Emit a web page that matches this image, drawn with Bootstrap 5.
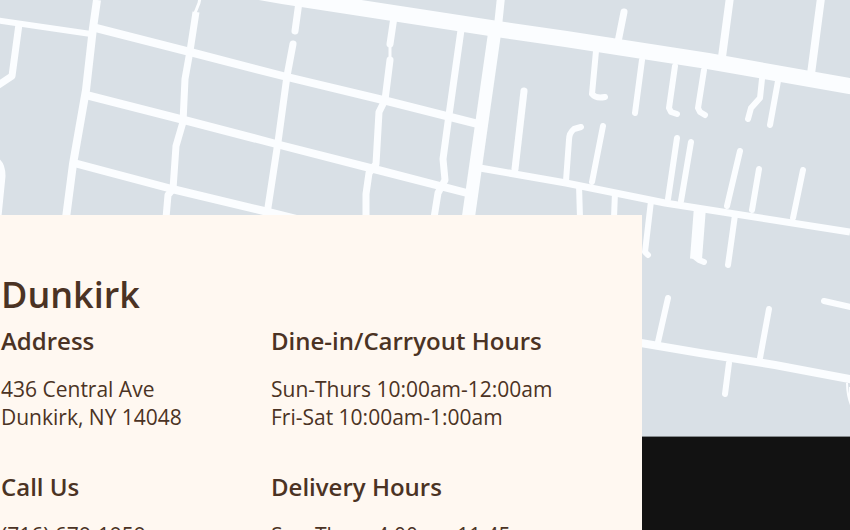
<!DOCTYPE html>
<html lang="en">
<head>
<meta charset="utf-8">
<meta name="viewport" content="width=device-width, initial-scale=1">
<title>Dunkirk</title>
<link href="https://cdn.jsdelivr.net/npm/bootstrap@5.3.0/dist/css/bootstrap.min.css" rel="stylesheet">
<style>
  body { background: #121212; color: #4b3324; font-family: "Open Sans", "Noto Sans", sans-serif; font-size: 21px; line-height: 28px; }
  .street-map { height: 437px; background: #d9e0e6; border-bottom: 1px solid #858a8d; }
  .location-panel { width: calc(100% - 208px); min-height: 316px; margin-top: -222px; padding: 60px 0 0 1px; background: #fff8f1; }
  .location-panel h1 { font-size: 36px; line-height: 40px; font-weight: 600; }
  .location-panel h2 { font-size: 24px; line-height: 28px; font-weight: 600; margin-bottom: 20px; }
  .info-grid { display: grid; grid-template-columns: 246px 1fr; gap: 42px 24px; }
</style>
</head>
<body>
<main class="vh-100 overflow-hidden">
  <div class="street-map overflow-hidden">
    <svg class="d-block w-100 h-100" viewBox="0 0 850 436" preserveAspectRatio="xMinYMin slice" role="img" aria-label="Street map" fill="none" stroke="#fbfdff" stroke-linejoin="round">
      <path stroke-width="16" d="M230-13 L283-4 L497 29 L566 39 L708 61 L850 86 L870 90"/>
      <path stroke-width="13" d="M495 30 L468 220"/>
      <path stroke-width="12" d="M700 207 L696 259"/>
      <g stroke-width="8">
        <path d="M97 0 L93 28 L86 90 L73 164 L66 218"/>
        <path stroke-width="6" d="M-5 20 L91 34"/>
        <path d="M92 27 L190 52 L283 76 L383 100 L478 124"/>
        <path d="M86 95 L184 120 L280 145 L374 169 L467 193"/>
        <path d="M74 163 L172 189 L264 211 L300 220"/>
      </g>
      <g stroke-width="7">
        <path d="M19 24 L12 76 L-3 86"/>
        <path d="M196 12 L190 51 L185 79 L183 122 L176 146 L173 189 L168 195 L166 218"/>
        <path stroke-width="3" d="M200-2 L199 3 L195 13"/>
        <path stroke-width="9" d="M-4 162 Q1 166 1 176 L-3 216"/>
        <path d="M299 2 L295 31" stroke-linecap="round"/>
        <path d="M293 44 L287 76 L278 142 L267 214" stroke-linecap="round"/>
        <path d="M394 17 L390 44 M390 60 L385 100 L379 112 L376 164 L369 173 L366 194 L366 218" stroke-linecap="round"/>
        <path stroke-width="3" d="M390 44 V62"/>
        <path d="M461 30 L449 115 L443 159 L445 180 L438 193 L434 218"/>
        <path stroke-width="8" d="M501-3 L498 26"/>
        <path stroke-linecap="round" d="M524 91 L515 169"/>
        <path d="M480 168 L566 183 L665 203 L850 232"/>
        <path stroke-linecap="round" d="M624 12 L618 42"/>
        <path stroke-width="8" d="M730-3 L722 57 M821-2 L811 74"/>
        <path stroke-linecap="round" stroke-width="6" d="M596 51 L592 94 Q596 99 605 97 M642 60 L635 113 M675 66 L669 108 L671 112 L677 114 M704 70 L698 108 L700 112 L705 115 M762 79 L760 98 L751 108 L748 119 M778 81 L770 125"/>
        <path stroke-linecap="round" stroke-width="6" d="M581 127 L574 129 Q569 133 569 140 L566 181 M603 126 L592 182 M677 138 L668 199 M691 142 L681 201 M740 151 L727 206 M759 169 L752 210 M803 170 L793 218"/>
        <path stroke-width="6" d="M579 185 L580 218 M615 192 L614 218"/>
        <path stroke-linecap="round" stroke-width="6" d="M651 201 L645 252 L648 255 M735 215 L728 265 M694 256 L699 260 L704 262"/>
        <path stroke-linecap="round" stroke-width="6" d="M668 298 L658 342 M769 309 L760 358 M729 363 L725 394 M824 301 L855 308"/>
        <path stroke-width="8" d="M635 342 L700 353 L775 365 L860 381"/>
        <path stroke-width="2" d="M847 383 Q847 395 851 405 M850 387 V400"/>
      </g>
    </svg>
  </div>
  <section class="location-panel position-relative">
    <h1 class="mb-2">Dunkirk</h1>
    <div class="info-grid pt-1">
      <div>
        <h2>Address</h2>
        <address class="mb-0">436 Central Ave<br>Dunkirk, NY 14048</address>
      </div>
      <div>
        <h2>Dine-in/Carryout Hours</h2>
        <p class="mb-0">Sun-Thurs 10:00am-12:00am<br>Fri-Sat 10:00am-1:00am</p>
      </div>
      <div>
        <h2>Call Us</h2>
        <p class="mb-0">(716) 679-1959</p>
      </div>
      <div>
        <h2>Delivery Hours</h2>
        <p class="mb-0">Sun-Thurs 4:00pm-11:45pm</p>
      </div>
    </div>
  </section>
</main>
<script src="https://cdn.jsdelivr.net/npm/bootstrap@5.3.0/dist/js/bootstrap.bundle.min.js"></script>
</body>
</html>
